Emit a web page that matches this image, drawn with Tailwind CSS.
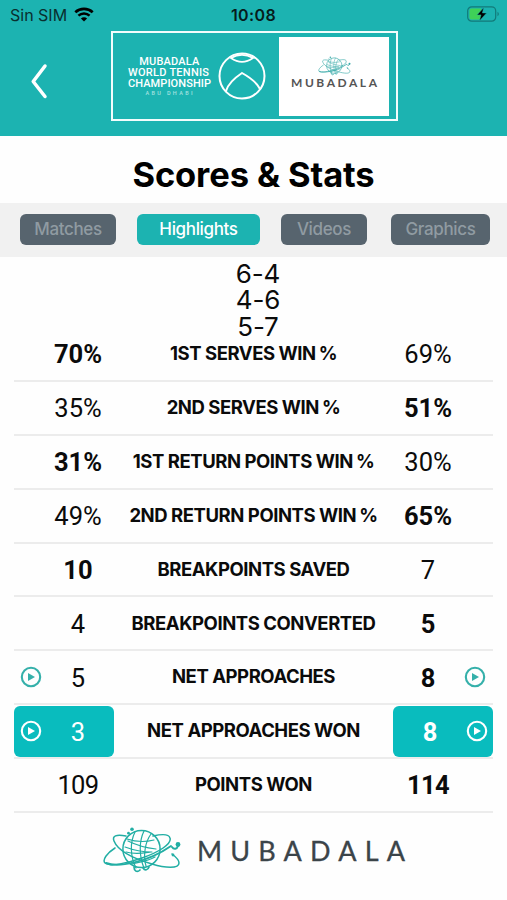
<!DOCTYPE html>
<html lang="en">
<head>
    <meta charset="UTF-8">
    <meta name="viewport" content="width=device-width, initial-scale=1.0">
    <title>Scores &amp; Stats</title>
    <script src="https://cdn.jsdelivr.net/npm/@tailwindcss/browser@4"></script>
</head>
<body class="bg-[#fefefe] h-[900px] overflow-hidden font-['Inter',sans-serif] text-[#0b0b0b]">
    <!-- Shared icons -->
    <svg class="hidden">
        <symbol id="play" viewBox="0 0 22 22">
            <circle cx="11" cy="11" r="9.2" fill="none" stroke="currentColor" stroke-width="2.1"/>
            <path d="M8 7 15 11l-7 4z" fill="currentColor"/>
        </symbol>
        <symbol id="globe" viewBox="0 0 78 48">
            <g fill="none" stroke="currentColor" stroke-linecap="round">
                <circle cx="38.5" cy="23" r="18.6" stroke-width="1.5"/>
                <path d="M32 6c-5 10-5 24 1 36M41 5c-5 10-5 25 0 37M48 8c-6 8-8 22-5 32" stroke-width="1.2"/>
                <path d="M25 15c10 5 19 7 28 8M24 13c9 3 19 3 27 1M23 26c10 3 18 1 25 0M22 21c8 3 18 5 27 5M29 38c8-2 16-3 23-7" stroke-width="1.2"/>
                <path d="M23 10C13 8 9 10 11 15c4 10 21 18 38 23 13 4 27 5 27-1 0-3-3-6-7-9" stroke-width="1.5"/>
                <path d="M12 22C4 27-1 34 2 37c5 4 23 0 37-5 17-6 30-14 28-20-1-4-8-4-17-2" stroke-width="1.5"/>
                <path d="M3 37c12 5 42-1 65-17" stroke-width="1.9"/>
                <path d="M31 41c0 4 3 6 6 3M40 42c2 3 5 2 6-1" stroke-width="1.7"/>
                <path d="M69 21c2 3 5 2 6-1" stroke-width="2"/>
            </g>
            <g fill="currentColor">
                <circle cx="29" cy="3.2" r="1.8"/>
                <circle cx="25.5" cy="7.2" r="1.4"/>
                <circle cx="75" cy="18.5" r="2.4"/>
                <circle cx="70" cy="29" r="1.4"/>
            </g>
        </symbol>
    </svg>

    <!-- Header -->
    <header class="h-[136px] bg-[#1cb3b1]">
        <div class="h-[31px] grid grid-cols-3 items-center px-2.5">
            <div class="flex items-center gap-[7px] text-[#092f2f] -mt-px">
                <span class="text-[16px] whitespace-nowrap">Sin SIM</span>
                <svg class="w-5 h-[15px] text-black -mt-px" viewBox="0 0 20 15">
                    <path d="M1.3 5.2C6.2.7 13.8.7 18.7 5.2" fill="none" stroke="currentColor" stroke-width="2.7"/>
                    <path d="M4.4 8.6c3.2-2.9 8-2.9 11.2 0" fill="none" stroke="currentColor" stroke-width="2.5"/>
                    <path d="M10 14.6 6.9 11.4c1.8-1.6 4.4-1.6 6.2 0z" fill="currentColor"/>
                </svg>
            </div>
            <span class="text-center text-[16px] font-semibold tracking-[0.35px] text-[#061c1c] -mt-px">10:08</span>
            <svg class="w-[33px] h-4 justify-self-end -mr-[3px] -mt-[3px]" viewBox="0 0 33 16">
                <rect x=".7" y=".8" width="28" height="14.4" rx="4" fill="none" stroke="#127a79" stroke-width="1.2"/>
                <path d="M4.5 2.4H14v11.2H4.5a2 2 0 0 1-2-2V4.4a2 2 0 0 1 2-2z" fill="#3fd158"/>
                <path d="M30.5 5.8c1.8.7 1.8 3.7 0 4.4z" fill="#127a79"/>
                <path d="M16.8 1.5 10 8.900h4l-1.600 6 7.200-8h-4.200z" fill="#000" stroke="#1cb3b1" stroke-width=".5"/>
            </svg>
        </div>
        <div class="flex">
            <button class="w-[111px] h-[100px] pl-[30px] flex items-center">
                <svg class="w-[18px] h-9" viewBox="0 0 18 36" fill="none" stroke="#fff" stroke-width="3.5" stroke-linecap="round" stroke-linejoin="round">
                    <path d="M15 3 3.200 18.500 15 33.500"/>
                </svg>
            </button>
            <div class="w-[287px] h-[90px] border-2 border-[#f2fdfc] flex">
                <svg class="w-[166px] h-[86px]" viewBox="0 0 166 86">
                    <g fill="#fff" class="font-['Roboto',sans-serif] font-medium" font-size="11" text-anchor="middle">
                        <text x="56.300" y="32.300" textLength="60">MUBADALA</text>
                        <text x="55.500" y="43.300" textLength="81">WORLD TENNIS</text>
                        <text x="56.500" y="54.300" textLength="83">CHAMPIONSHIP</text>
                        <text x="56" y="62" font-size="5.500" textLength="47" fill="#a5e2e0">ABU DHABI</text>
                    </g>
                    <g fill="none" stroke="#fff" stroke-width="2" stroke-linecap="round">
                        <circle cx="129" cy="43" r="22.500"/>
                        <path d="M118 25c7 5 15 5 22 0-7-4-15-4-22 0z" stroke-width="1.700"/>
                        <path d="M113 58c2-7 7-12 16-18 9 5 15 10 18 16"/>
                    </g>
                </svg>
                <div class="w-[110px] h-[79px] mt-1 bg-white flex flex-col items-center pt-[18.500px]">
                    <svg class="w-[33px] h-5 text-[#38aaa9]" stroke-opacity="1"><use href="#globe"/></svg>
                    <svg class="w-[88px] h-4 -mt-px" viewBox="0 0 88 16">
                        <text x="1" y="12.300" font-size="12" font-weight="700" textLength="86" fill="#555" class="font-['Lato',sans-serif]">MUBADALA</text>
                    </svg>
                </div>
            </div>
        </div>
    </header>

    <h1 class="h-[67px] pt-4 text-center text-[34.500px] leading-[46px] font-bold tracking-[-0.120px] text-black">Scores &amp; Stats</h1>

    <!-- Tabs -->
    <nav class="h-[54px] bg-[#f1f1f1] flex items-start pt-[11px] pl-5 text-[17px] tracking-[-0.350px] font-medium text-[#909ba2]">
        <button class="w-24 h-[31px] rounded-md bg-[#57646e] pt-px">Matches</button>
        <button class="w-[123px] h-[31px] ml-[21px] rounded-md bg-[#1cb3b1] text-white pt-px">Highlights</button>
        <button class="w-[86px] h-[31px] ml-[21px] rounded-md bg-[#57646e] pt-px">Videos</button>
        <button class="w-[99px] h-[31px] ml-6 rounded-md bg-[#57646e] pt-px">Graphics</button>
    </nav>

    <!-- Set scores -->
    <div class="h-[71px] pt-[3.500px] pl-[9px] text-center text-[26px] leading-[26.500px] tracking-[-0.200px]">
        <p>6-4</p>
        <p>4-6</p>
        <p>5-7</p>
    </div>

    <main id="stats" class="mx-3.5"></main>

    <!-- Sponsor -->
    <footer class="flex pl-[103px] pt-[13px]">
        <svg class="w-[78px] h-12 text-[#22aea4]"><use href="#globe"/></svg>
        <svg class="w-[214px] h-12 ml-4" viewBox="0 0 214 48">
            <text x="0" y="34.500" font-size="27" textLength="208" fill="#3b4449" stroke="#3b4449" stroke-width=".3" class="font-['Lato',sans-serif]">MUBADALA</text>
        </svg>
    </footer>

    <script>
        // bold marks the winning side, video adds the play buttons
        const stats = [
            { label: '1ST SERVES WIN', percent: true, a: '70%', b: '69%', bold: 'a' },
            { label: '2ND SERVES WIN', percent: true, a: '35%', b: '51%', bold: 'b' },
            { label: '1ST RETURN POINTS WIN', percent: true, a: '31%', b: '30%', bold: 'a' },
            { label: '2ND RETURN POINTS WIN', percent: true, a: '49%', b: '65%', bold: 'b' },
            { label: 'BREAKPOINTS SAVED', a: '10', b: '7', bold: 'a' },
            { label: 'BREAKPOINTS CONVERTED', a: '4', b: '5', bold: 'b' },
            { label: 'NET APPROACHES', a: '5', b: '8', bold: 'b', video: true },
            { label: 'NET APPROACHES WON', a: '3', b: '8', bold: 'b', video: true, active: true },
            { label: 'POINTS WON', a: '109', b: '114', bold: 'b' }
        ];

        function cell(row, side) {
            const icon = row.video ? '<svg class="w-[22px] h-[22px]"><use href="#play"/></svg>' : '';
            const color = row.active ? 'bg-[#09bcbe] text-white rounded-md' : '';
            const weight = row.bold === side ? 'font-bold' : '';
            const tracking = row[side].length === 3 && !row.percent ? 'tracking-[-0.600px]' : '';
            const iconColor = row.active ? 'text-white' : 'text-[#35b0aa]';
            const value = `<span class="w-[58px] pt-px text-center ${weight} ${tracking}">${row[side]}</span>`;
            const play = `<span class="w-[22px] ${iconColor}">${icon}</span>`;
            const shift = row.active ? 'pl-2 pr-[5px]' : 'pl-1.5 pr-[7px]';
            return side === 'a'
                ? `<div class="w-[100px] h-[51px] pl-1.5 pr-[7px] flex items-center justify-between ${color}">${play}${value}</div>`
                : `<div class="w-[100px] h-[51px] ${shift} flex items-center justify-between ${color}">${value}${play}</div>`;
        }

        document.getElementById('stats').innerHTML = stats.map(row => `
            <div class="h-[53.900px] border-b-2 border-[#ececec] flex items-center justify-between font-['Roboto',sans-serif] text-[25.500px]">
                ${cell(row, 'a')}
                <span class="font-['Inter',sans-serif] text-[18.500px] font-[650] tracking-[-0.450px] whitespace-nowrap">${row.label}${row.percent ? '<span class="ml-[3px]">%</span>' : ''}</span>
                ${cell(row, 'b')}
            </div>`).join('');
    </script>
</body>
</html>
